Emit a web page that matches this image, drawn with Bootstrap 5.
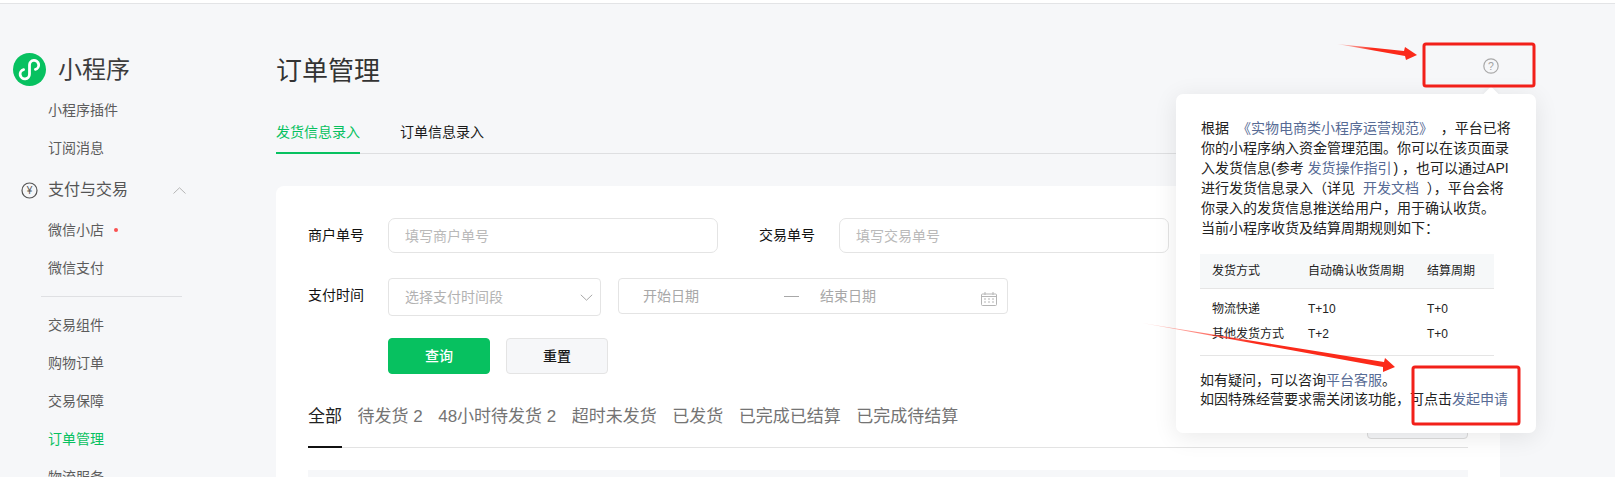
<!DOCTYPE html>
<html lang="zh-CN">
<head>
<meta charset="utf-8">
<title>订单管理</title>
<link href="https://cdn.jsdelivr.net/npm/bootstrap@5.3.0/dist/css/bootstrap.min.css" rel="stylesheet">
<style>
html,body{height:477px;overflow:hidden}
body{position:relative;background:#f6f7f9;color:#1a1a1a;font-family:"Liberation Sans","Noto Sans CJK SC",sans-serif;font-size:14px;line-height:20px}
.top-strip{height:4px;background:#fff;border-bottom:1px solid #e3e4e6}
.side-col{width:276px;flex:none;padding-top:49px}
.brand-row{height:33px;margin:0 0 5px 13px;gap:12px;font-size:24px;line-height:33px;color:#3d3d3d}
.side-link{display:flex;align-items:center;height:38px;padding-left:48px;color:#5c5c5c;text-decoration:none}
.side-link.now{color:#07c160}
.side-group{position:relative;font-size:16px;margin:4px 0 2px;color:#555}
.side-ico{position:absolute;left:21px;top:11px}
.side-chev{position:absolute;left:173px;top:16px}
.side-dot{width:4px;height:4px;border-radius:50%;background:#fa5151;margin-left:10px}
.side-rule{height:1px;background:#dfe0e3;margin:9px 0 9px 41px;width:141px}
.main-col{width:1224px;flex:none;padding-top:50px}
.page-title{font-size:26px;line-height:34px;font-weight:400;color:#333;margin:0}
.tab-row{margin-top:34px;border-bottom:1px solid #dedfe1;gap:40px;height:32px}
.tab-item{height:32px;color:#1a1a1a;text-decoration:none;line-height:20px}
.tab-item.now{color:#07c160;border-bottom:2px solid #07c160}
.panel-box{margin-top:32px;background:#fff;border-radius:8px 8px 0 0;padding:32px 32px 0;height:300px}
.fld-label{width:80px;flex:none;line-height:35px;color:#111}
.fld-ctl.form-control{width:330px;height:35px;flex:none;border:1px solid #e4e4e4;border-radius:7px;padding:0 16px;font-size:14px;color:#1a1a1a;box-shadow:none;background:#fff}
.fld-ctl::placeholder{color:#b9b9b9}
.gap-lbl{margin-left:41px}
.row-two{margin-top:25px;height:38px}
.pick-box{border:1px solid #e4e4e4;border-radius:4px;color:#b2b2b2;background:#fff}
.pick-sel{width:213px;height:38px;padding:0 7px 0 16px}
.pick-date{width:390px;height:36px;margin-left:17px;position:relative;padding-left:24px;color:#a8a8a8}
.date-dash{width:15px;height:1px;background:#a8a8a8;margin-left:85px;margin-right:21px}
.date-ico{position:absolute;left:362px;top:13px}
.act-row{margin:22px 0 0 80px;gap:16px}
.act-btn.btn{width:102px;height:36px;padding:0;font-size:14px;line-height:34px;border-radius:4px}
.act-go.btn{background:#07c160;border:1px solid #07c160;color:#fff;font-weight:500}
.act-reset.btn{background:#f6f7f9;border:1px solid #e4e4e4;color:#1a1a1a;font-weight:500}
.flt-row{margin-top:31px;height:43px;border-bottom:1px solid #e3e3e3;gap:15.5px;font-size:17px;line-height:24px}
.flt-item{height:43px;color:#747474;text-decoration:none}
.flt-item.now{color:#222;border-bottom:2px solid #111}
.flt-extra{width:101px;height:36px;margin:-2px 0 0 auto;border:1px solid #dcdcdc;border-radius:4px;background:#f6f7f9}
.grey-band{margin-top:22px;height:60px;background:#f6f7f9}
.help-ico{position:absolute;left:1483px;top:58px}
.tip-box{position:absolute;left:1176px;top:94px;width:360px;height:339px;background:#fff;border-radius:7px;padding:24px 22px 0 25px;box-shadow:0 4px 24px rgba(0,0,0,.09);white-space:nowrap;color:#222}
.tip-box::before{content:"";position:absolute;left:309px;top:-5px;width:12px;height:12px;background:#fff;transform:rotate(45deg);box-shadow:-2px -2px 4px rgba(0,0,0,.03)}
.tip-box a{color:#576b95;text-decoration:none}
.tip-box a.wide-a{margin:0 4px}
.tip-box a.wide-b{margin-right:2px}
.tip-table.table{width:294px;margin:16px 0 0 -1px;table-layout:fixed;font-size:12px;line-height:20px;--bs-table-bg:transparent;border-bottom:1px solid #e5e5e5}
.tip-table.table th{font-weight:400;background:#f6f8f9;height:34px;padding:0 0 0 12px;vertical-align:middle;border-bottom:1px solid #e5e5e5;color:#222}
.tip-table.table th:nth-child(1){width:96px}
.tip-table.table th:nth-child(2){width:119px}
.tip-table.table td{height:33px;padding:10px 0 3px 12px;border:0;vertical-align:top;color:#222}
.tip-table.table tr.lst td{padding:2px 0 11px 12px}
.tip-foot{margin:15px 0 0 -1px;line-height:19.5px}
.mark-layer{position:absolute;left:0;top:0;pointer-events:none}
</style>
</head>
<body>
<div class="top-strip"></div>
<div class="d-flex">
  <aside class="side-col">
    <div class="brand-row d-flex align-items-center">
      <svg width="33" height="33" viewBox="0 0 33 33"><circle cx="16.5" cy="16.5" r="16.5" fill="#07c160"/><path d="M10.6 16.6A4.7 4.7 0 1 0 16.5 21V12A4.6 4.6 0 1 1 22.4 16.4" fill="none" stroke="#fff" stroke-width="2.8" stroke-linecap="round"/></svg>
      <span>小程序</span>
    </div>
    <nav class="d-flex flex-column">
      <a class="side-link" href="#">小程序插件</a>
      <a class="side-link" href="#">订阅消息</a>
      <a class="side-link side-group" href="#">
        <svg class="side-ico" width="17" height="17" viewBox="0 0 17 17"><circle cx="8.5" cy="8.5" r="7.5" fill="none" stroke="#555" stroke-width="1.2"/><text x="8.5" y="12" font-size="10" text-anchor="middle" fill="#555" font-family="Liberation Sans">¥</text></svg>
        支付与交易
        <svg class="side-chev" width="13" height="7" viewBox="0 0 13 7"><path d="M.5 6.5 6.5.8l6 5.7" fill="none" stroke="#b5b5b5" stroke-width="1"/></svg>
      </a>
      <a class="side-link" href="#">微信小店<span class="side-dot"></span></a>
      <a class="side-link" href="#">微信支付</a>
      <div class="side-rule"></div>
      <a class="side-link" href="#">交易组件</a>
      <a class="side-link" href="#">购物订单</a>
      <a class="side-link" href="#">交易保障</a>
      <a class="side-link now" href="#">订单管理</a>
      <a class="side-link" href="#">物流服务</a>
    </nav>
  </aside>
  <main class="main-col">
    <h1 class="page-title">订单管理</h1>
    <div class="tab-row d-flex">
      <a class="tab-item now" href="#">发货信息录入</a>
      <a class="tab-item" href="#">订单信息录入</a>
    </div>
    <section class="panel-box">
      <div class="d-flex">
        <span class="fld-label">商户单号</span>
        <input class="fld-ctl form-control" placeholder="填写商户单号">
        <span class="fld-label gap-lbl">交易单号</span>
        <input class="fld-ctl form-control" placeholder="填写交易单号">
      </div>
      <div class="row-two d-flex align-items-start">
        <span class="fld-label">支付时间</span>
        <div class="pick-box pick-sel d-flex align-items-center justify-content-between">
          <span>选择支付时间段</span>
          <svg width="13" height="7" viewBox="0 0 13 7"><path d="M.8.8 6.5 6.2 12.2.8" fill="none" stroke="#a8a8a8" stroke-width="1"/></svg>
        </div>
        <div class="pick-box pick-date d-flex align-items-center">
          <span>开始日期</span>
          <span class="date-dash"></span>
          <span>结束日期</span>
          <svg class="date-ico" width="16" height="14" viewBox="0 0 16 14"><rect x=".5" y="2" width="15" height="11.5" rx="1" fill="none" stroke="#b5b5b5"/><path d="M4 0v3M12 0v3M.5 4.5h15" stroke="#b5b5b5" fill="none"/><path d="M3 7h2M7 7h2M11 7h2M3 10h2M7 10h2M11 10h2" stroke="#b5b5b5" fill="none"/></svg>
        </div>
      </div>
      <div class="act-row d-flex">
        <button class="act-btn act-go btn" type="button">查询</button>
        <button class="act-btn act-reset btn" type="button">重置</button>
      </div>
      <div class="flt-row d-flex">
        <a class="flt-item now" href="#">全部</a>
        <a class="flt-item" href="#">待发货 2</a>
        <a class="flt-item" href="#">48小时待发货 2</a>
        <a class="flt-item" href="#">超时未发货</a>
        <a class="flt-item" href="#">已发货</a>
        <a class="flt-item" href="#">已完成已结算</a>
        <a class="flt-item" href="#">已完成待结算</a>
        <div class="flt-extra"></div>
      </div>
      <div class="grey-band"></div>
    </section>
  </main>
</div>

<svg class="help-ico" width="16" height="16" viewBox="0 0 16 16"><circle cx="8" cy="8" r="7.2" fill="none" stroke="#a9a9a9" stroke-width="1.2"/><text x="8" y="11.6" font-size="10.5" text-anchor="middle" fill="#a0a0a0" font-family="Liberation Sans">?</text></svg>

<div class="tip-box">
  <div>根据 <a class="wide-a" href="#">《实物电商类小程序运营规范》</a> &#xFF0C;平台已将<br>你的小程序纳入资金管理范围。你可以在该页面录<br>入发货信息(参考 <a class="wide-b" href="#">发货操作指引</a>) &#xFF0C;也可以通过API<br>进行发货信息录入&#xFF08;详见 <a class="wide-a" href="#">开发文档</a> &#xFF09;&#xFF0C;平台会将<br>你录入的发货信息推送给用户&#xFF0C;用于确认收货。<br>当前小程序收货及结算周期规则如下&#xFF1A;</div>
  <table class="tip-table table">
    <thead><tr><th>发货方式</th><th>自动确认收货周期</th><th>结算周期</th></tr></thead>
    <tbody>
      <tr><td>物流快递</td><td>T+10</td><td>T+0</td></tr>
      <tr class="lst"><td>其他发货方式</td><td>T+2</td><td>T+0</td></tr>
    </tbody>
  </table>
  <div class="tip-foot">如有疑问&#xFF0C;可以咨询<a href="#">平台客服</a>。<br>如因特殊经营要求需关闭该功能&#xFF0C;可点击<a href="#">发起申请</a></div>
</div>

<svg class="mark-layer" width="1615" height="477" viewBox="0 0 1615 477">
  <defs>
    <linearGradient id="fadeA" x1="0" x2="1" y1="0" y2="0"><stop offset="0" stop-color="#ff2a1a" stop-opacity=".15"/><stop offset=".45" stop-color="#fb2a1a"/></linearGradient>
  </defs>
  <polygon points="1337,44 1404,51 1405,47 1417,55 1406,60 1405,56" fill="url(#fadeA)"/>
  <polygon points="1142,323 1384,362 1385,358 1395,367 1383,372 1383,367" fill="url(#fadeA)"/>
  <rect x="1424" y="44" width="110" height="42" rx="2" fill="none" stroke="#f2201a" stroke-width="3"/>
  <rect x="1413" y="367" width="106" height="57" rx="2" fill="none" stroke="#f2201a" stroke-width="3"/>
</svg>
<script src="https://cdn.jsdelivr.net/npm/bootstrap@5.3.0/dist/js/bootstrap.bundle.min.js"></script>
</body>
</html>
